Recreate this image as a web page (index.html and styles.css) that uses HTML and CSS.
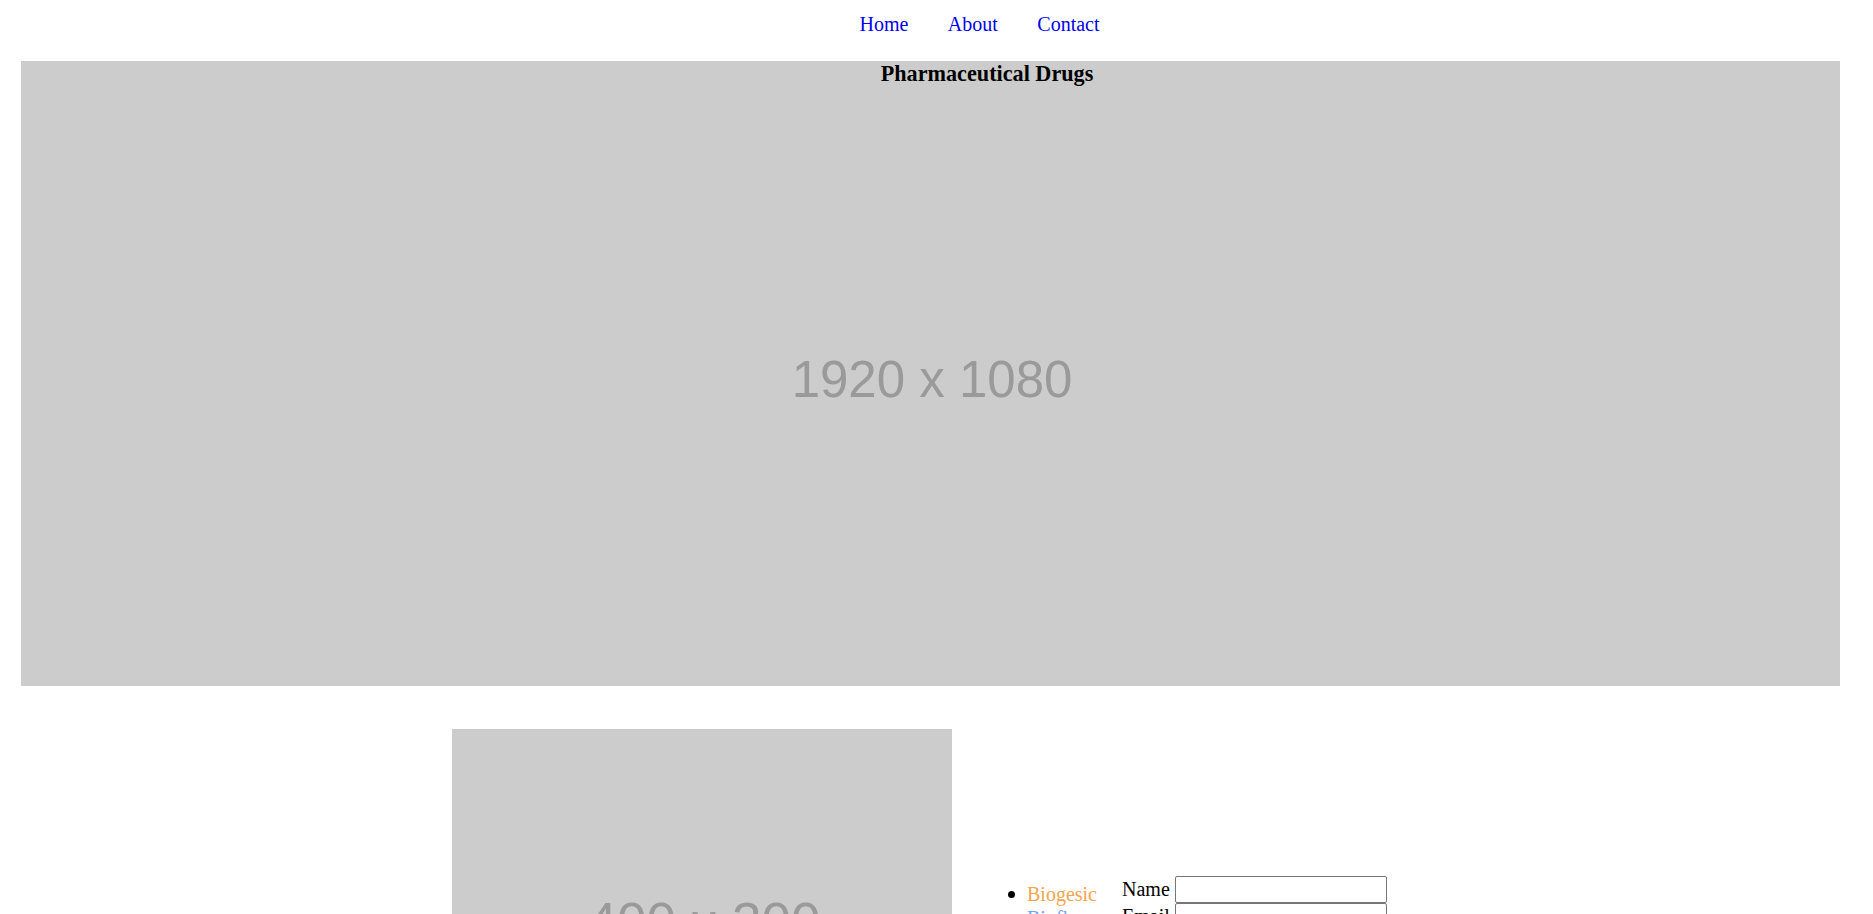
FILE: index.html
```html
<!DOCTYPE html>
<html lang="en">
<head>
<meta charset="utf-8">
<title>Pharmaceutical Drugs</title>
<link rel="stylesheet" href="styles.css">
</head>
<body>
<nav class="topnav">
  <ul class="topnav-list">
    <li><a class="topnav-link" href="#">Home</a></li>
    <li><a class="topnav-link" href="#">About</a></li>
    <li><a class="topnav-link" href="#">Contact</a></li>
  </ul>
</nav>
<header class="hero">
  <h3 class="hero-title">Pharmaceutical Drugs</h3>
  <div class="hero-placeholder">1920 x 1080</div>
</header>
<section class="content">
  <div class="thumb"><span class="thumb-text">400 x 300</span></div>
  <ul class="drug-list">
    <li class="drug drug-orange">Biogesic</li>
    <li class="drug drug-blue">Bioflu</li>
  </ul>
  <form class="contact-form">
    <div class="form-row"><label class="form-label" for="name">Name</label><input class="form-input" id="name" type="text"></div>
    <div class="form-row"><label class="form-label" for="email">Email</label><input class="form-input" id="email" type="text"></div>
  </form>
</section>
</body>
</html>
```
FILE: styles.css
```css
html, body {
  margin: 0;
  padding: 0;
  background: #ffffff;
}
body {
  font-family: "Liberation Serif", "Times New Roman", serif;
  font-size: 20px;
  color: #000000;
  overflow: hidden;
}
.topnav {
  height: 61px;
  box-sizing: border-box;
  padding-top: 13px;
}
.topnav-list {
  list-style: none;
  margin: 0;
  padding: 0 0 0 86px;
  display: flex;
  justify-content: center;
  gap: 39.5px;
  line-height: 23px;
}
.topnav-link {
  color: #0000ee;
  text-decoration: none;
}
.hero {
  margin-left: 21px;
  width: 1819px;
  height: 625px;
  background: #cccccc;
  display: grid;
  grid-template-columns: 1fr;
  grid-template-rows: 1fr;
}
.hero-title {
  grid-area: 1 / 1;
  align-self: start;
  margin: 0;
  padding-left: 113px;
  text-align: center;
  font-size: 22.2px;
  font-weight: bold;
  line-height: 25px;
  padding-top: 0;
}
.hero-placeholder {
  grid-area: 1 / 1;
  align-self: center;
  justify-self: center;
  margin-top: 12px;
  margin-left: 3px;
  font-family: "Liberation Sans", Arial, sans-serif;
  font-size: 51px;
  line-height: 51px;
  color: #9a9a9a;
}
.content {
  margin-top: 43px;
  padding-left: 452px;
  display: flex;
  align-items: flex-start;
}
.thumb {
  width: 500px;
  height: 375px;
  flex: none;
  background: #cccccc;
  display: flex;
  align-items: center;
  justify-content: center;
}
.thumb-text {
  margin-top: 10px;
  margin-left: 4px;
  font-family: "Liberation Sans", Arial, sans-serif;
  font-size: 53px;
  line-height: 53px;
  color: #9a9a9a;
}
.drug-list {
  list-style: none;
  margin: 153px 0 0 56px;
  padding: 0;
  line-height: 24px;
}
.drug {
  display: flex;
  align-items: center;
}
.drug::before {
  content: "";
  width: 7px;
  height: 7px;
  border-radius: 50%;
  background: #000000;
  margin-right: 12px;
  flex: none;
}
.drug-orange {
  color: #f2a54e;
}
.drug-blue {
  color: #7aa3ee;
}
.contact-form {
  margin: 147px 0 0 25px;
}
.form-row {
  display: flex;
  align-items: center;
  gap: 5px;
  height: 27px;
  line-height: 23px;
}
.form-input {
  box-sizing: border-box;
  width: 212px;
  height: 27px;
  margin: 0;
  padding: 1px 3px;
  border: 1px solid #767676;
  border-radius: 2px;
  background: #ffffff;
  font-family: "Liberation Sans", Arial, sans-serif;
  font-size: 16px;
}
```
